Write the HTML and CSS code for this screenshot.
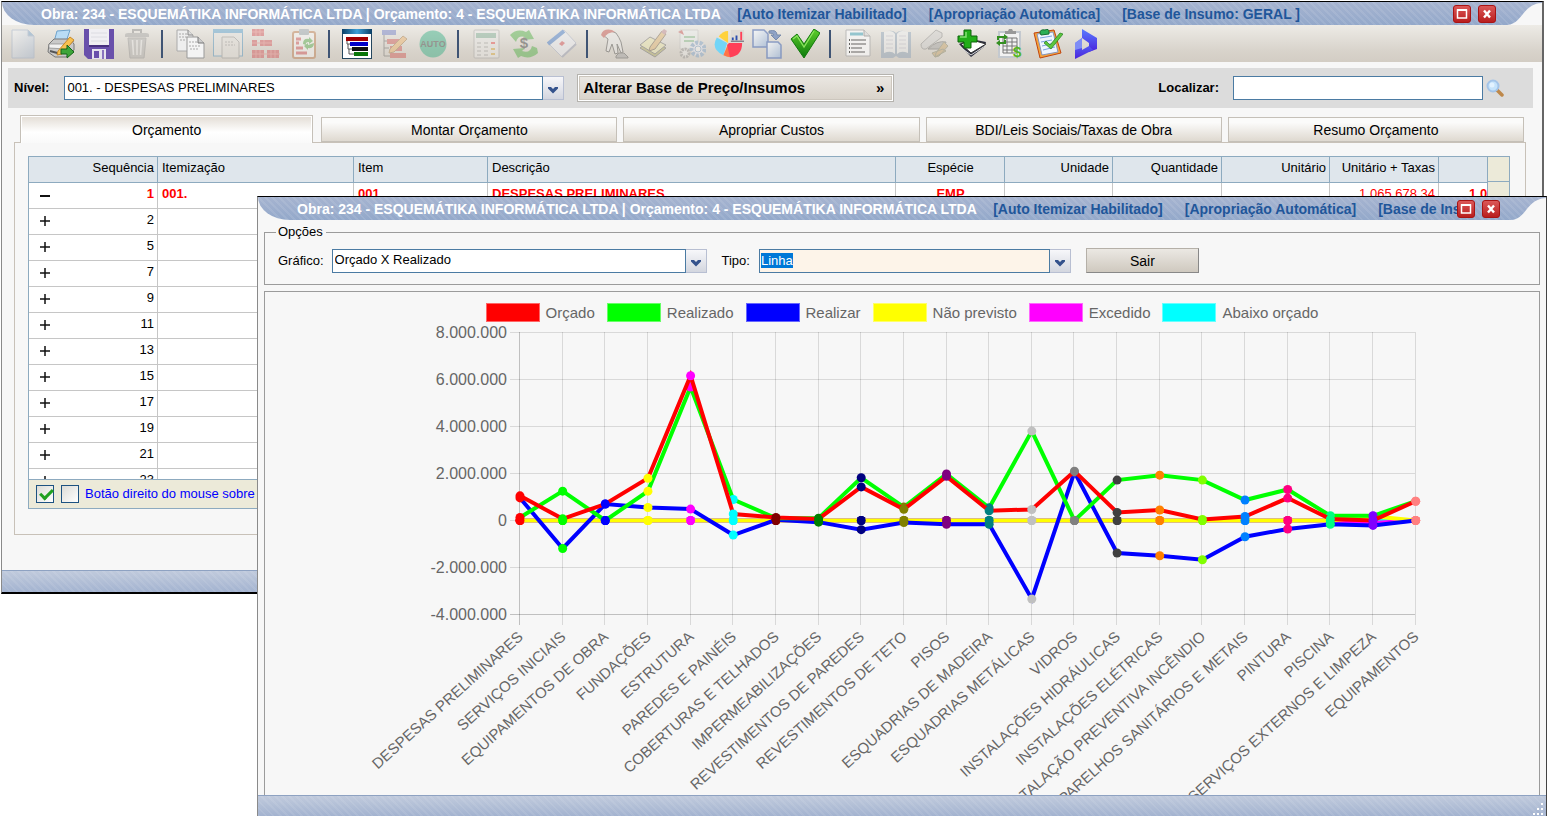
FILE: index.html
```html
<!DOCTYPE html>
<html lang="pt-BR">
<head>
<meta charset="utf-8">
<title>Orçamento</title>
<link rel="stylesheet" href="styles.css">
</head>
<body>
<svg class="defs" aria-hidden="true">
  <defs>
    <linearGradient id="gCheck" x1="0" y1="0" x2="0" y2="1"><stop offset="0" stop-color="#5fce2c"/><stop offset="1" stop-color="#0c7a0c"/></linearGradient>
    <linearGradient id="gPage" x1="0" y1="0" x2="1" y2="1"><stop offset="0" stop-color="#fdfeff"/><stop offset="1" stop-color="#9fb8da"/></linearGradient>
    <linearGradient id="gRed" x1="0" y1="0" x2="0" y2="1"><stop offset="0" stop-color="#dc5a5a"/><stop offset="1" stop-color="#b81c1c"/></linearGradient>
    <linearGradient id="gBlue" x1="0" y1="0" x2="0" y2="1"><stop offset="0" stop-color="#5a7cff"/><stop offset="1" stop-color="#4a22dc"/></linearGradient>
    <linearGradient id="gTop" x1="0" y1="0" x2="1" y2="0"><stop offset="0" stop-color="#0b3f66"/><stop offset=".5" stop-color="#3c9fd6"/><stop offset="1" stop-color="#0b3f66"/></linearGradient>
    <symbol id="max" viewBox="0 0 18 18"><rect x=".5" y=".5" width="17" height="17" rx="2.500" fill="url(#gRed)" stroke="#a81414"/><rect x="4.500" y="5" width="9" height="8" fill="none" stroke="#fff" stroke-width="1.500"/><path d="M4 5h10" stroke="#fff" stroke-width="2"/></symbol>
    <symbol id="close" viewBox="0 0 18 18"><rect x=".5" y=".5" width="17" height="17" rx="2.500" fill="url(#gRed)" stroke="#a81414"/><path d="M6 5.500l6 7M12 5.500l-6 7" stroke="#fff" stroke-width="2.400"/></symbol>
    <symbol id="corner" viewBox="0 0 35 23"><path d="M0 23C16 22 15 2 35 1V23z" fill="#f7f7f7"/></symbol>
    <symbol id="arrow" viewBox="0 0 12 8"><path d="M1 1h3l2 2 2-2h3v1.500L6 7.500 1 2.500z" fill="#34528c"/></symbol>
  </defs>
</svg>

<main class="desktop">
  <section class="window window-main" aria-label="Orçamento">
    <header class="titlebar">
      <h1 class="title">Obra: 234 - ESQUEMÁTIKA INFORMÁTICA LTDA | Orçamento: 4 - ESQUEMÁTIKA INFORMÁTICA LTDA
        <span class="flag">[Auto Itemizar Habilitado]</span><span class="flag">[Apropriação Automática]</span><span class="flag">[Base de Insumo: GERAL ]</span></h1>
      <button class="winbtn" aria-label="Maximizar"><svg><use href="#max"/></svg></button>
      <button class="winbtn" aria-label="Fechar"><svg><use href="#close"/></svg></button>
      <svg class="corner" aria-hidden="true"><use href="#corner"/></svg>
    </header>

    <nav class="toolbar" aria-label="Ferramentas">
      <button class="tool off" aria-label="Novo"><svg viewBox="0 0 30 30"><path d="M4 1h16l6 6v22H4z" fill="url(#gPage)" stroke="#8fa6c8"/><path d="M20 1v6h6" fill="#5d95c8" stroke="#8fa6c8"/></svg></button>
      <button class="tool" aria-label="Imprimir"><svg viewBox="0 0 30 30"><path d="M11 2l13-1-4 12H8z" fill="#b9dcf5" stroke="#6fa3cc"/><path d="M3 15l5-5h16l4 5v6l-8 7H9l-7-5z" fill="#c9c9c9" stroke="#777"/><path d="M3 15h17l8-3-8 8-17-1z" fill="#f1f1f1" stroke="#888" stroke-width=".7"/><path d="M4 22l11 3" stroke="#555" stroke-width="2"/><path d="M12 22L24 8l4 3-12 14-5 1z" fill="#f7c150" stroke="#c98a2a"/><path d="M15 20h6v-4l7 7-7 6v-4h-6z" fill="#3ea63a" stroke="#16651a"/></svg></button>
      <button class="tool" aria-label="Salvar"><svg viewBox="0 0 30 30"><path d="M0 0h30v30H4l-4-4z" fill="#6950ab"/><rect x="5" y="0" width="20" height="17" fill="#f0eff3"/><path d="M7 4h16M7 8h16M7 12h16" stroke="#dcdce2"/><path d="M5 16h20v2H5z" fill="#48317f"/><rect x="8" y="20" width="14" height="10" fill="#e5e3ec"/><rect x="10" y="22" width="5" height="7" fill="#6950ab"/><path d="M19 21v9" stroke="#8974be" stroke-width="2"/></svg></button>
      <button class="tool off" aria-label="Excluir"><svg viewBox="0 0 30 30"><path d="M11 4V1h8v3" fill="none" stroke="#777" stroke-width="2"/><path d="M3 6q0-2 3-2h18q3 0 3 2v2H3z" fill="#999"/><path d="M6 9h18l-2 20H8z" fill="#aaa" stroke="#888"/><path d="M10.500 11l1 15M15 11v15M19.500 11l-1 15" stroke="#eee" stroke-width="1.600"/></svg></button>
      <span class="sep"></span>
      <button class="tool" aria-label="Copiar"><svg viewBox="0 0 30 30"><path d="M2 1h11l5 5v16H2z" fill="#eee" stroke="#aaa"/><path d="M13 1v5h5" fill="#ddd" stroke="#888"/><path d="M4 5h8M4 8h9M5 11h6" stroke="#aaa" stroke-dasharray="2 1"/><path d="M12 8h11l6 6v15H12z" fill="#f4f4f4" stroke="#999"/><path d="M23 8v6h6" fill="#ccc" stroke="#777"/><path d="M14 13h8M14 17h12M15 20h8" stroke="#aaa" stroke-dasharray="2 1"/></svg></button>
      <button class="tool off" aria-label="Colar em janela"><svg viewBox="0 0 30 30"><rect x=".5" y="1" width="29" height="26" fill="#e8e8e6" stroke="#3385bb"/><path d="M0 2h30" stroke="#3b93cc" stroke-width="4"/><path d="M9 8h12l5 5v16H9z" fill="#e6e4e0" stroke="#888"/><path d="M12 13h8M12 16h10" stroke="#888" stroke-dasharray="2 1"/></svg></button>
      <button class="tool off" aria-label="Alvenaria"><svg viewBox="0 0 30 30"><g fill="#d33c43"><path d="M1 0h12v7H1zM1 11h5v6H1zM9 11h12v6H9zM1 21h12v8H1zM16 21h12v8H16z"/></g><path d="M1 3h12M1 14h20M1 25h28M5 0v7M9 0v7M13 11v6M5 21v8M9 21v8M20 21v8M24 21v8" stroke="#e77"/></svg></button>
      <button class="tool off" aria-label="Lista de materiais"><svg viewBox="0 0 30 30"><rect x="4" y="3" width="22" height="26" rx="2" fill="#fff" stroke="#b76b35" stroke-width="2"/><rect x="10" y="0" width="10" height="6" rx="1" fill="#8a9aa6"/><path d="M14 15q0-6 6-5l0-2 4 4-4 3v-2q-4 0-3 3zM25 14q0 6-6 5v2l-4-4 4-3v2" fill="#43a838"/><path d="M7 10h5M7 14h3M7 19h7M7 24h11" stroke="#d33c43" stroke-width="3"/></svg></button>
      <span class="sep"></span>
      <button class="tool" aria-label="Cronograma"><svg viewBox="0 0 30 30"><rect x=".5" y=".5" width="29" height="29" fill="#fff" stroke="#24465e"/><path d="M0 0h30v5H0z" fill="url(#gTop)"/><path d="M4 8h22v4H4z" fill="#a00000"/><path d="M8 13h18v4H8z" fill="#0000c8"/><path d="M10 18h16v4H10z" fill="#111"/><path d="M12 23h14v4H12z" fill="#087508"/><path d="M5 12v3h3M6 15v5h4M7 20v5h5" stroke="#555" fill="none"/></svg></button>
      <button class="tool off" aria-label="Editar itens"><svg viewBox="0 0 30 30"><path d="M2 1h14v5H2z" fill="#5a6bc4"/><path d="M7 10h15v5H7zM10 17h12v5H10zM10 24h16v5H10z" fill="#cf4340"/><path d="M4 6v21h6M4 12h3M4 19h5" fill="none" stroke="#555"/><path d="M10 20L23 7l4 3-13 13-5 1z" fill="#f3ad58" stroke="#9c6b2e"/></svg></button>
      <button class="tool off" aria-label="Automático"><svg viewBox="0 0 30 30"><circle cx="15" cy="15" r="13.500" fill="#16a777"/><text class="auto-text" x="15" y="18" text-anchor="middle">AUTO</text></svg></button>
      <span class="sep"></span>
      <button class="tool off" aria-label="Calculadora"><svg viewBox="0 0 30 30"><rect x="3" y="1" width="25" height="28" rx="1" fill="#eee" stroke="#999"/><path d="M5 4h20v5H5z" fill="#6fa78c"/><path d="M6 14h4M6 18h4M6 22h4M6 26h4M13 14h4M13 18h4M13 22h4M13 26h4" stroke="#bbb" stroke-width="2"/><path d="M20 14h4" stroke="#e33" stroke-width="2"/><path d="M20 20h4M20 25h4" stroke="#dca426" stroke-width="2"/></svg></button>
      <button class="tool off" aria-label="Reajuste"><svg viewBox="0 0 30 30"><path d="M1 6q7-7 16-3l3-2 5 9-12 1 3-3q-7-2-9 5zM29 24q-8 7-17 3l-3 2-5-9 12-1-3 3q8 3 10-5l5 2z" fill="#35a829"/><text class="money-text" x="15" y="19" text-anchor="middle">$</text></svg></button>
      <button class="tool off" aria-label="Agenda"><svg viewBox="0 0 30 30"><path d="M1 14L17 1l12 13-14 14z" fill="#f2f5ff" stroke="#9fa9c4"/><path d="M1 15L17 2" stroke="#2366c8" stroke-width="4"/><path d="M15 12l3 2-3 3-3-2z" fill="#d6343d"/><path d="M15 28l14-13" stroke="#8b93ad" stroke-width="2"/></svg></button>
      <span class="sep"></span>
      <button class="tool off" aria-label="Selecionar"><svg viewBox="0 0 30 30"><path d="M3 6q2-4 8-4l5 2q3 4 5 9l2 10-2 1-4-9 1 9-3 1-3-10-3 8-3-1 2-12z" fill="#eee" stroke="#333"/><path d="M1 6q2-7 11-5l3 2q-8 0-11 6z" fill="#bd3029"/><path d="M16 27l3-3h5l4 4v1H16z" fill="#999" stroke="#444"/></svg></button>
      <button class="tool off" aria-label="Anotar"><svg viewBox="0 0 30 30"><path d="M2 19l10-8 16 8-11 9z" fill="#a6a24a" stroke="#555"/><path d="M2 16L12 8l16 8-11 9z" fill="#f0eba4" stroke="#555"/><path d="M12 18L24 2l4 3-11 15-6 2z" fill="#e4b05d" stroke="#5d492d"/><path d="M23 3l4 3 2-4-3-2z" fill="#b77882"/></svg></button>
      <button class="tool off" aria-label="Configurar"><svg viewBox="0 0 30 30"><path d="M4 1h18v19H4z" fill="#eef4f4" stroke="#bbb"/><path d="M2 3l4-2 2 5z" fill="#c53939"/><path d="M8 8h11M8 12h10" stroke="#79b982" stroke-width="2"/><circle cx="22" cy="20" r="6.500" fill="#eef" stroke="#6f9bc9" stroke-width="4" stroke-dasharray="3 1.500"/><circle cx="9" cy="24" r="4" fill="#eee" stroke="#888" stroke-width="3" stroke-dasharray="2 1"/><circle cx="22" cy="20" r="3" fill="#fff" stroke="#6f9bc9"/></svg></button>
      <button class="tool" aria-label="Gráficos"><svg viewBox="0 0 32 30"><path d="M15 1v13L5 7q4-6 10-6z" fill="#ffd23d"/><path d="M14 14L10 27Q-4 20 3 8z" fill="#72d5f7"/><path d="M15 15l3 14q-4 0-8-2z" fill="#ff7547"/><path d="M16 14h14q0 14-13 15L14 16z" fill="#ff4058"/><path d="M18 0h14v13H18z" fill="#dedad4"/><path d="M19 11V8h2v3zM23 11V6h2v5z" fill="#2d4fae"/><path d="M28 11V2h2v9z" fill="#ff4058"/><path d="M18 12h14" stroke="#556" stroke-width="1"/></svg></button>
      <button class="tool half" aria-label="Transferir"><svg viewBox="0 0 30 30"><path d="M1 1h11l4 4v13H1z" fill="url(#gPage)" stroke="#6882bd" stroke-width="1.500"/><path d="M15 13h11l3 3v13H15z" fill="url(#gPage)" stroke="#6882bd" stroke-width="1.500"/><path d="M17 2q8-2 8 4h4l-5 5-5-5h3q0-2-5-2z" fill="#6b88bd" stroke="#4b6898"/></svg></button>
      <button class="tool" aria-label="Confirmar"><svg viewBox="0 0 30 30"><path d="M1 10l6-5 7 10L24 0l6 4-16 25z" fill="url(#gCheck)" stroke="#127a0c"/><path d="M3 10l4-3 7 11L24 2" fill="none" stroke="#8ae45e" stroke-width="1.300"/></svg></button>
      <span class="sep"></span>
      <button class="tool half" aria-label="Relatório"><svg viewBox="0 0 30 30"><path d="M3 1h18l6 6v20H3z" fill="#fafafa" stroke="#aaa"/><path d="M21 1v6h6" fill="#ddd" stroke="#999"/><path d="M7 5h13" stroke="#72b9c9" stroke-width="3"/><path d="M8 11h15M8 15h15M8 19h11M8 23h14" stroke="#777" stroke-width="1.500"/><path d="M6 11h1M6 15h1M6 19h1M6 23h1" stroke="#333" stroke-width="2"/></svg></button>
      <button class="tool off" aria-label="Livro"><svg viewBox="0 0 30 30"><path d="M0 3h5q6-3 10 1 5-4 10-1h5v26H18l-3-2-3 2H0z" fill="#7f99b5"/><path d="M3 3q8-3 11 2v20q-4-4-11-1zM27 3q-8-3-11 2v20q4-4 11-1z" fill="#f3f5f8"/><path d="M5 7h7M5 11h7M5 15h7M5 19h7M18 7h7M18 11h7M18 15h7M18 19h7" stroke="#bbc"/></svg></button>
      <button class="tool off" aria-label="Medição"><svg viewBox="0 0 30 30"><path d="M2 15L17 1l6 3v4L7 20q-5 1-5-5z" fill="#ccc" stroke="#777"/><path d="M9 20q9-9 18-7-1 6-7 7z" fill="#999" stroke="#555"/><path d="M13 24l11-4 3 2-11 6zM25 13l4 4-9 10-4 1 1-4z" fill="#c59b56" stroke="#775"/></svg></button>
      <button class="tool" aria-label="Adicionar"><svg viewBox="0 0 30 30"><path d="M2 15l12-5 15 3-2 5-13 10z" fill="#2a2c3d"/><path d="M4 15l11-4 14 4-15 9z" fill="#fff" stroke="#333"/><path d="M3 18l11 8 14-9" fill="none" stroke="#ddd" stroke-width="1"/><path d="M7 1h7v6h6v6h-6v6H7v-6H1V7h6z" fill="#22ae19" stroke="#0d650a"/><path d="M9 3v5H3" fill="none" stroke="#85e174" stroke-width="1.500"/></svg></button>
      <button class="tool" aria-label="Planilha de custos"><svg viewBox="0 0 30 30"><path d="M4 3h21v25H4z" fill="#f2f2f2" stroke="#c4c9cf" stroke-width="2"/><path d="M10 5V2h3l1-2h3l1 2h3v3z" fill="#999"/><path d="M8 9h14v15H8zM8 13h14M8 17h14M8 21h14M12 9v15M17 9v15" fill="none" stroke="#777"/><path d="M2 11V7h7V5l4 3-4 3V9H4v2zM11 11v4H5v2l-4-3 4-3v2h4v-2z" fill="#349021"/><text class="cost-text" x="18" y="28">$</text></svg></button>
      <button class="tool" aria-label="Verificar lista"><svg viewBox="0 0 30 30"><path d="M1 4l20-3 7 23L7 29z" fill="#f5a33b" stroke="#c1450d"/><path d="M4 5l16-2 5 20-16 3z" fill="#eef5ff" stroke="#8794bb"/><path d="M7 9l12-2M8 13l11-2M9 17l12-3M10 21l12-3" stroke="#7ba2df"/><path d="M7 4q0-4 5-3 4-2 4 2v2L8 6z" fill="#2bb057" stroke="#156e32"/><path d="M13 12l4 4L27 4l3 1-12 15-7-6z" fill="#5cc63e" stroke="#21801b" stroke-width=".7"/></svg></button>
      <button class="tool" aria-label="Modelo 3D"><svg viewBox="0 0 30 30"><path d="M11 0l15 9v11l-8 3V14l-7-5z" fill="url(#gBlue)"/><path d="M11 9L4 14v16l18-9-4-4-7 4z" fill="url(#gBlue)"/><path d="M11 9l-7 5v7l7-2z" fill="#7f8df6"/></svg></button>
    </nav>

    <div class="filters">
      <label class="strong" for="nivel">Nível:</label>
      <span class="combo combo-level">
        <select id="nivel"><option>001. - DESPESAS PRELIMINARES</option></select>
        <svg class="chev" aria-hidden="true"><use href="#arrow"/></svg>
      </span>
      <button class="base-button"><span>Alterar Base de Preço/Insumos</span><span>»</span></button>
      <label class="strong search-label" for="busca">Localizar:</label>
      <input class="search" id="busca" type="text">
      <button class="lens" aria-label="Pesquisar"><svg viewBox="0 0 18 18"><path d="M11 11l5 5" stroke="#be884a" stroke-width="3.500" stroke-linecap="round"/><circle cx="7" cy="7" r="5.500" fill="#c5e3fb" stroke="#a4c4e8" stroke-width="2"/><circle cx="6" cy="6" r="2.500" fill="#e2f2ff"/></svg></button>
    </div>

    <div class="tabs" role="tablist">
      <button class="tab active" role="tab" aria-selected="true">Orçamento</button>
      <button class="tab" role="tab">Montar Orçamento</button>
      <button class="tab" role="tab">Apropriar Custos</button>
      <button class="tab" role="tab">BDI/Leis Sociais/Taxas de Obra</button>
      <button class="tab" role="tab">Resumo Orçamento</button>
    </div>

    <div class="panel">
      <div class="grid">
        <div class="grid-view">
          <table>
            <colgroup><col class="c-toggle"><col class="c-seq"><col class="c-itemizacao"><col class="c-item"><col class="c-desc"><col class="c-wide"><col class="c-num"><col class="c-wide"><col class="c-num"><col class="c-wide"><col class="c-total"></colgroup>
            <thead><tr><th class="toggle"></th><th class="num">Sequência</th><th>Itemização</th><th>Item</th><th>Descrição</th><th class="mid">Espécie</th><th class="num">Unidade</th><th class="num">Quantidade</th><th class="num">Unitário</th><th class="num">Unitário + Taxas</th><th></th></tr></thead>
            <tbody id="rows"></tbody>
          </table>
        </div>
        <div class="gutter"></div>
      </div>
      <div class="grid-foot">
        <input type="checkbox" id="opt1" aria-label="Mostrar itens" checked>
        <input type="checkbox" id="opt2">
        <label for="opt2">Botão direito do mouse sobre</label>
      </div>
    </div>
    <footer class="statusbar"></footer>
  </section>

  <section class="window window-chart" aria-label="Gráfico">
    <header class="titlebar">
      <h2 class="title">Obra: 234 - ESQUEMÁTIKA INFORMÁTICA LTDA | Orçamento: 4 - ESQUEMÁTIKA INFORMÁTICA LTDA
        <span class="flag">[Auto Itemizar Habilitado]</span><span class="flag">[Apropriação Automática]</span><span class="flag">[Base de Insumo: GERAL ]</span></h2>
      <button class="winbtn" aria-label="Maximizar"><svg><use href="#max"/></svg></button>
      <button class="winbtn" aria-label="Fechar"><svg><use href="#close"/></svg></button>
      <svg class="corner" aria-hidden="true"><use href="#corner"/></svg>
    </header>
    <fieldset class="options">
      <legend>Opções</legend>
      <div class="options-row">
        <label for="grafico">Gráfico:</label>
        <span class="combo combo-chart">
          <select id="grafico"><option>Orçado X Realizado</option></select>
          <svg class="chev" aria-hidden="true"><use href="#arrow"/></svg>
        </span>
        <label class="type-label" for="tipo">Tipo:</label>
        <span class="combo combo-type">
          <input id="tipo" type="text" role="combobox" aria-expanded="false" value="Linha">
          <svg class="chev" aria-hidden="true"><use href="#arrow"/></svg>
        </span>
        <button class="exit">Sair</button>
      </div>
    </fieldset>
    <div class="chart-panel">
      <ul class="legend">
        <li><i class="sw red"></i>Orçado</li>
        <li><i class="sw green"></i>Realizado</li>
        <li><i class="sw blue"></i>Realizar</li>
        <li><i class="sw yellow"></i>Não previsto</li>
        <li><i class="sw magenta"></i>Excedido</li>
        <li><i class="sw cyan"></i>Abaixo orçado</li>
      </ul>
      <svg id="chart" class="chart" viewBox="265 322 1274 473" preserveAspectRatio="xMidYMin slice" role="img" aria-label="Orçado X Realizado"></svg>
    </div>
    <footer class="statusbar"><svg class="grip" viewBox="0 0 14 14" aria-hidden="true"><path d="M9 1h2v2H9zM5 6h2v2H5zM9 6h2v2H9zM1 11h2v2H1zM5 11h2v2H5zM9 11h2v2H9z" fill="#fff"/></svg></footer>
  </section>
</main>
<script src="app.js"></script>
</body>
</html>
```

FILE: styles.css
```css
* { box-sizing: border-box; }

body {
  margin: 0;
  background: #fff;
  color: #000;
  font: 13px/16px "Liberation Sans", Arial, sans-serif;
}

button, input, select { font: inherit; color: inherit; border-radius: 0; margin: 0; }
button { padding: 0; cursor: pointer; }

.defs { position: absolute; width: 0; height: 0; }

.desktop {
  position: relative;
  height: 100vh;
  overflow: hidden;
}

/* windows */
.window {
  position: absolute;
  display: flex;
  flex-direction: column;
  background: #f7f7f7;
  border: 1px solid #8a8a8a;
  border-top-color: #000;
}
.window-main {
  inset: 1px 3px 224px 1px;
  border-right: 2px solid #666;
  border-bottom: 2px solid #000;
}
.window-chart { inset: 196px 0 2px 257px; border-right-color: #444; border-bottom: 0; }

.titlebar {
  display: flex;
  align-items: center;
  gap: 7px;
  flex: none;
  height: 23px;
  padding-left: 39px;
  border-bottom-left-radius: 32px 23px;
  background:
    repeating-linear-gradient(45deg, rgba(255, 255, 255, .09) 0 2px, transparent 2px 5px),
    linear-gradient(#a6b4d0, #93a8ca);
}
.title {
  flex: 1;
  min-width: 0;
  margin: 0 -7px 0 0;
  overflow: hidden;
  white-space: nowrap;
  font-size: 14px;
  line-height: 20px;
  font-weight: bold;
  color: #fff;
}
.flag { margin-left: 13px; color: #1f569a; }
.flag + .flag { margin-left: 22px; }
.winbtn { width: 18px; height: 18px; border: 0; background: none; }
.winbtn svg { display: block; width: 18px; height: 18px; }
.corner { width: 35px; height: 23px; margin-left: 4px; }

.statusbar {
  display: flex;
  justify-content: flex-end;
  align-items: flex-end;
  flex: none;
  height: 22px;
  border-top: 1px solid #8ea2c2;
  background:
    repeating-linear-gradient(45deg, rgba(255, 255, 255, .08) 0 2px, transparent 2px 5px),
    linear-gradient(#c0cadc, #a3b3d0);
}
.window-chart .statusbar { height: 21px; }
.grip { width: 14px; height: 14px; }

/* toolbar */
.toolbar {
  display: flex;
  align-items: center;
  flex: none;
  height: 37px;
  padding-left: 2px;
  background: linear-gradient(#edebe6, #d8d3cb 70%, #d3cdc4);
}
.tool { flex: none; width: 38px; height: 32px; border: 0; background: none; }
.tool svg { display: block; width: 30px; height: 30px; margin: 0 auto; }
.off svg { opacity: .38; }
.half svg { opacity: .7; }
.sep {
  flex: none;
  width: 2px;
  height: 28px;
  margin: 0 8px 0 5px;
  background: #3f5474;
}
.auto-text { font-size: 9px; font-weight: bold; fill: #222; }
.money-text { font-size: 15px; font-weight: bold; fill: #222; }
.cost-text { font-size: 15px; font-weight: bold; fill: #53b522; }

/* filters */
.filters {
  display: flex;
  align-items: center;
  flex: none;
  height: 40px;
  margin: 6px 9px 0 6px;
  padding: 0 29px 0 6px;
  background: #dcdcdc;
}
.strong { font-weight: bold; }
.search-label { margin-left: auto; margin-right: 14px; }

.combo {
  position: relative;
  display: inline-flex;
  height: 24px;
  padding-right: 20px;
  border: 1px solid #b8bfd2;
  border-left: 0;
  background: linear-gradient(#f7f7fa, #d3d6df);
}
.combo select, .combo input {
  appearance: none;
  flex: 1;
  min-width: 0;
  height: 24px;
  margin-top: -1px;
  padding: 0 2px 1px;
  border: 1px solid #4b7ba3;
  background: #fff;
  outline: none;
}
.chev { position: absolute; right: 4px; top: 9px; width: 12px; height: 8px; pointer-events: none; }
.combo-level { width: 500px; margin-left: 15px; }

.base-button {
  display: flex;
  justify-content: space-between;
  align-items: center;
  width: 317px;
  height: 28px;
  margin-left: 13px;
  padding: 0 9px 0 5px;
  border: 1px solid #b5b3ae;
  box-shadow: inset 0 0 0 1px #fff, inset 0 0 0 2px #ccc6bd;
  background: linear-gradient(#ebe8e3, #d8d2c9);
  font-size: 15px;
  font-weight: bold;
}
.search { width: 250px; height: 24px; border: 1px solid #4b7ba3; background: #fff; }
.lens { width: 18px; height: 18px; margin-left: 3px; border: 0; background: none; }
.lens svg { display: block; }

/* tabs */
.tabs {
  display: flex;
  align-items: flex-end;
  gap: 6px;
  flex: none;
  margin: 7px 18px 0;
}
.tab {
  flex: 100;
  height: 25px;
  border: 1px solid #c5c0b8;
  background: linear-gradient(#fbfbfa 20%, #dfd9d0);
  font-size: 14px;
}
.tab.active {
  position: relative;
  flex: 99;
  height: 28px;
  margin: 0 2px -1px 0;
  border-bottom: 0;
  box-shadow: inset 1px 1px #fff, inset -1px 0 #fff;
  background: linear-gradient(#e2dcd4, #fff 60%, #f9f9f9);
}

.panel {
  display: flex;
  flex-direction: column;
  flex: 1;
  min-height: 0;
  margin: 0 16px 35px 12px;
  padding: 13px 15px 25px 13px;
  border: 1px solid #c8c1b8;
}

/* grid */
.grid {
  display: flex;
  flex: 1;
  min-height: 0;
  border: 1px solid #8daabf;
}
.grid-view { flex: 1; min-width: 0; overflow: hidden; background: #fff; }
.gutter {
  width: 22px;
  border-left: 1px solid #8daabf;
  background: linear-gradient(#8daabf, #8daabf) 0 24px / 100% 1px no-repeat #ecead9;
}
table { width: 1520px; table-layout: fixed; border-collapse: separate; border-spacing: 0; }
.c-toggle { width: 33px; }
.c-seq { width: 96px; }
.c-itemizacao { width: 196px; }
.c-item { width: 134px; }
.c-desc { width: 408px; }
.c-wide { width: 109px; }
.c-num { width: 108px; }
.c-total { width: 110px; }
th, td {
  height: 26px;
  padding: 0 3px 0 4px;
  border-right: 1px solid #c6c6c6;
  border-bottom: 1px solid #c6c6c6;
  text-align: left;
  vertical-align: top;
  line-height: 22px;
  white-space: nowrap;
}
th {
  border-color: #8daabf;
  background: #dfe6ec;
  font-weight: normal;
}
.toggle { padding: 6px 0 0 10px; border-right: 0; }
.toggle svg { display: block; width: 12px; height: 12px; }
.num { text-align: right; }
.mid { text-align: center; }
.root td { color: #f00; font-weight: bold; }
.root .plain { font-weight: normal; }

.grid-foot {
  display: flex;
  align-items: center;
  gap: 7px;
  flex: none;
  height: 29px;
  padding-left: 7px;
  border: 1px solid #8daabf;
  border-top: 0;
  background: #ecead9;
  color: #00f;
}
.grid-foot label { margin-left: -1px; }
.grid-foot input {
  appearance: none;
  width: 18px;
  height: 18px;
  border: 1px solid #1d5281;
  background: linear-gradient(135deg, #dcdcd7, #fff);
}
.grid-foot input:checked::before {
  content: "";
  display: block;
  width: 10px;
  height: 5px;
  margin: 3px;
  border: solid #21a121;
  border-width: 0 0 3px 3px;
  transform: rotate(-45deg);
}

/* chart window */
.options {
  flex: none;
  min-width: 0;
  margin: 4px 6px 0;
  padding: 8px 13px 11px;
  border: 1px solid #9b9b9b;
}
.options legend { padding: 0 3px 0 2px; margin-left: -2px; }
.options-row { display: flex; align-items: center; height: 25px; }
.combo-chart { width: 375px; margin-left: 8px; }
.type-label { margin-left: 15px; }
.combo-type { width: 312px; margin-left: 9px; }
.combo-type input { padding: 0 1px 1px; background: #fdf4e9; }
.combo-type input::selection { background: #0078d7; color: #fff; }
.exit {
  width: 113px;
  height: 25px;
  margin-left: 15px;
  border: 1px solid #b5b0a8;
  border-right-color: #888;
  border-bottom-color: #888;
  background: linear-gradient(#ebe8e3, #cfc9bf);
  font-size: 14px;
}

.chart-panel {
  display: flex;
  flex-direction: column;
  flex: 1;
  min-height: 0;
  margin: 6px 6px 0;
  border: 1px solid #9b9b9b;
  border-bottom: 0;
}
.legend {
  display: flex;
  justify-content: center;
  gap: 12px;
  flex: none;
  margin: 0;
  padding: 11px 0 0;
  list-style: none;
  font-size: 15px;
  line-height: 19px;
  color: #666;
}
.legend li { display: flex; gap: 6px; }
.sw { width: 54px; height: 19px; border: 1px solid rgba(255, 255, 255, .4); }
.red { background: #f00; }
.green { background: #0f0; }
.blue { background: #00f; }
.yellow { background: #ff0; }
.magenta { background: #f0f; }
.cyan { background: #0ff; }

.chart { display: block; flex: 1; width: 100%; min-height: 0; }
.gridline { stroke: #000; stroke-opacity: .12; }
.axis { stroke: #000; stroke-opacity: .22; }
.line { fill: none; stroke-width: 4; stroke-linejoin: miter; }
.ytext { font-size: 16px; fill: #666; text-anchor: end; }
.xtext { font-size: 15px; fill: #666; text-anchor: end; }
```

FILE: app.js
```js
const NS = "http://www.w3.org/2000/svg";

/* budget rows */
const minus = '<svg viewBox="0 0 12 12"><path d="M1 7h10" stroke="#111" stroke-width="2"/></svg>';
const plus = '<svg viewBox="0 0 12 12"><path d="M1 6h10M6 1v10" stroke="#111" stroke-width="1.500"/></svg>';
const blank = "<td></td>".repeat(9);
const rows = [2, 5, 7, 9, 11, 13, 15, 17, 19, 21, 23]
  .map(n => `<tr><td class="toggle">${plus}</td><td class="num">${n}</td>${blank}</tr>`);
rows.unshift(`<tr class="root"><td class="toggle">${minus}</td><td class="num">1</td><td>001.</td><td>001</td>
  <td>DESPESAS PRELIMINARES</td><td class="mid">EMP</td><td></td><td></td><td></td>
  <td class="num plain">1.065.678,34</td><td class="num">1.065.678,34</td></tr>`);
document.getElementById("rows").innerHTML = rows.join("");

/* line chart, values in thousands */
const stages = [
  ["DESPESAS PRELIMINARES", "#ff0000"], ["SERVIÇOS INICIAIS", "#00ff00"], ["EQUIPAMENTOS DE OBRA", "#0000ff"],
  ["FUNDAÇÕES", "#ffff00"], ["ESTRUTURA", "#ff00ff"], ["PAREDES E PAINÉIS", "#00ffff"],
  ["COBERTURAS E TELHADOS", "#800000"], ["IMPERMEABILIZAÇÕES", "#008000"], ["REVESTIMENTOS DE PAREDES", "#000080"],
  ["REVESTIMENTOS DE TETO", "#808000"], ["PISOS", "#800080"], ["ESQUADRIAS DE MADEIRA", "#008080"],
  ["ESQUADRIAS METÁLICAS", "#c0c0c0"], ["VIDROS", "#808080"], ["INSTALAÇÕES HIDRÁULICAS", "#404040"],
  ["INSTALAÇÕES ELÉTRICAS", "#ff8000"], ["INSTALAÇÃO PREVENTIVA INCÊNDIO", "#80ff00"],
  ["APARELHOS SANITÁRIOS E METAIS", "#0080ff"], ["PINTURA", "#ff0080"], ["PISCINA", "#00ff80"],
  ["SERVIÇOS EXTERNOS E LIMPEZA", "#8000ff"], ["EQUIPAMENTOS", "#ff8080"]
];
const flat = new Array(22).fill(0);
const except = (i, v) => flat.map((z, k) => k === i ? v : z);
const series = [
  ["#00ffff", flat],
  ["#ff00ff", except(20, -110)],
  ["#ffff00", except(20, 180)],
  ["#0000ff", [960, -1190, 700, 555, 485, -620, 30, -70, -390, -85, -160, -160, -3340, 2060, -1385, -1500, -1670, -690, -360, -160, -210, 0]],
  ["#00ff00", [130, 1250, 0, 1250, 5680, 895, 100, 100, 1820, 570, 1980, 540, 3805, 0, 1720, 1930, 1720, 870, 1320, 200, 200, 820]],
  ["#ff0000", [1050, 70, 700, 1800, 6160, 275, 130, 65, 1430, 475, 1880, 415, 470, 2100, 345, 445, 45, 170, 955, 60, 5, 820]]
];
const chart = document.getElementById("chart");
const px = i => 520 + i * 42.65;
const py = v => 520.5 - v * 0.0235;

function add(tag, attrs, text) {
  const el = document.createElementNS(NS, tag);
  for (const k in attrs) el.setAttribute(k, attrs[k]);
  if (text) el.textContent = text;
  chart.appendChild(el);
}

for (let v = 8000; v >= -4000; v -= 2000) {
  const y = py(v);
  add("path", { d: `M510 ${y}H1415`, class: v === -4000 ? "axis" : "gridline" });
  add("text", { x: 507, y: y + 5, class: "ytext" }, v ? `${v / 1000}.000.000` : "0");
}
stages.forEach(([name], i) => {
  const x = Math.round(px(i)) - 0.5;
  add("path", { d: `M${x} 332V625`, class: i ? "gridline" : "axis" });
  add("text", { x: 0, y: 0, class: "xtext", transform: `translate(${px(i) + 4} 638) rotate(-42)` }, name);
});
series.forEach(([color, values]) => {
  add("polyline", { points: values.map((v, i) => `${px(i)},${py(v)}`).join(" "), stroke: color, class: "line" });
  values.forEach((v, i) => add("circle", { cx: px(i), cy: py(v), r: 4.5, fill: stages[i][1] }));
});

const tipo = document.getElementById("tipo");
tipo.focus();
tipo.select();
```
